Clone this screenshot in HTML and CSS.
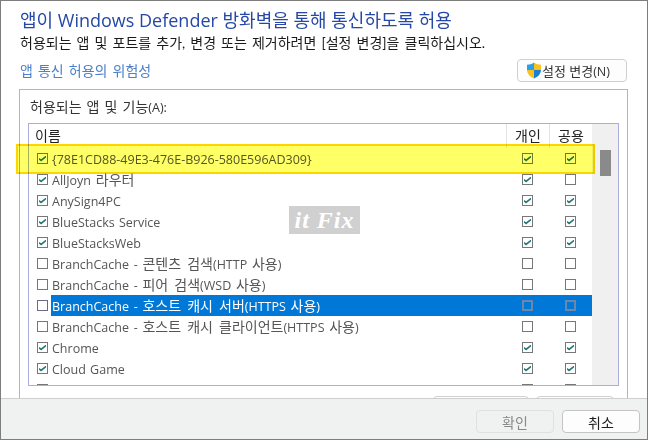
FILE: index.html
```html
<!DOCTYPE html>
<html lang="ko">
<head>
<meta charset="utf-8">
<title>허용되는 앱</title>
<link rel="stylesheet" href="styles.css">
</head>
<body>
<div class="window">
  <main class="main">
    <h1 class="title">앱이 Windows Defender 방화벽을 통해 통신하도록 허용</h1>
    <p class="subtitle">허용되는 앱 및 포트를 추가, 변경 또는 제거하려면 [설정 변경]을 클릭하십시오.</p>
    <div class="linkrow">
      <span class="link">앱 통신 허용의 위험성</span>
      <button class="btn change">
        <svg class="shield" viewBox="0 0 16 17" width="16" height="17">
          <path d="M8 .5C6 2 3.500 2.700 1 2.800V8H8Z" fill="#2b9fe8"/>
          <path d="M8 .5C10 2 12.500 2.700 15 2.800V8H8Z" fill="#f7c21b"/>
          <path d="M1 8C1.300 12 4 15 8 16.500V8Z" fill="#f7c21b"/>
          <path d="M15 8C14.700 12 12 15 8 16.500V8Z" fill="#1c7fd0"/>
        </svg><span>설정 변경<span class="en">(N)</span></span>
      </button>
    </div>
    <section class="group">
      <div class="group-label">허용되는 앱 및 기능<span class="en">(A):</span></div>
      <div class="table">
        <div class="table-main">
          <div class="thead">
            <div class="th name">이름</div>
            <div class="th col">개인</div>
            <div class="th col">공용</div>
          </div>
          <div class="rows">
            <div class="row"><span class="box on"></span><span class="label en">{78E1CD88-49E3-476E-B926-580E596AD309}</span><span class="cell"><span class="box on"></span></span><span class="cell"><span class="box on"></span></span></div>
            <div class="row"><span class="box on"></span><span class="label"><span class="en">AllJoyn </span>라우터</span><span class="cell"><span class="box on"></span></span><span class="cell"><span class="box"></span></span></div>
            <div class="row"><span class="box on"></span><span class="label en">AnySign4PC</span><span class="cell"><span class="box on"></span></span><span class="cell"><span class="box on"></span></span></div>
            <div class="row"><span class="box on"></span><span class="label en">BlueStacks Service</span><span class="cell"><span class="box on"></span></span><span class="cell"><span class="box on"></span></span></div>
            <div class="row"><span class="box on"></span><span class="label en">BlueStacksWeb</span><span class="cell"><span class="box on"></span></span><span class="cell"><span class="box on"></span></span></div>
            <div class="row"><span class="box"></span><span class="label"><span class="en">BranchCache - </span>콘텐츠 검색<span class="en">(HTTP </span>사용<span class="en">)</span></span><span class="cell"><span class="box"></span></span><span class="cell"><span class="box"></span></span></div>
            <div class="row"><span class="box"></span><span class="label"><span class="en">BranchCache - </span>피어 검색<span class="en">(WSD </span>사용<span class="en">)</span></span><span class="cell"><span class="box"></span></span><span class="cell"><span class="box"></span></span></div>
            <div class="row selected"><span class="box"></span><span class="label"><span class="en">BranchCache - </span>호스트 캐시 서버<span class="en">(HTTPS </span>사용<span class="en">)</span></span><span class="cell"><span class="box"></span></span><span class="cell"><span class="box"></span></span></div>
            <div class="row"><span class="box"></span><span class="label"><span class="en">BranchCache - </span>호스트 캐시 클라이언트<span class="en">(HTTPS </span>사용<span class="en">)</span></span><span class="cell"><span class="box"></span></span><span class="cell"><span class="box"></span></span></div>
            <div class="row"><span class="box on"></span><span class="label en">Chrome</span><span class="cell"><span class="box on"></span></span><span class="cell"><span class="box on"></span></span></div>
            <div class="row"><span class="box on"></span><span class="label en">Cloud Game</span><span class="cell"><span class="box on"></span></span><span class="cell"><span class="box on"></span></span></div>
            <div class="row"><span class="box on"></span><span class="label en">Collaboration</span><span class="cell"><span class="box on"></span></span><span class="cell"><span class="box on"></span></span></div>
          </div>
        </div>
        <div class="scrollbar"><div class="thumb"></div></div>
      </div>
      <div class="group-actions">
        <button class="btn ghost wide"></button>
        <button class="btn ghost narrow"></button>
      </div>
    </section>
  </main>
  <footer class="footer">
    <button class="btn foot disabled">확인</button>
    <button class="btn foot">취소</button>
  </footer>
  <div class="highlight"></div>
  <div class="watermark">it Fix</div>
</div>
</body>
</html>
```
FILE: styles.css
```css
* { box-sizing: border-box; }
html, body { margin: 0; padding: 0; }
body {
  width: 648px; height: 440px; overflow: hidden; background: #fff;
  font-family: "Lato", "Noto Sans CJK KR", sans-serif;
  font-size: 14px; color: #222; word-spacing: 1.500px;
}
.en { font-family: "Open Sans", "Noto Sans CJK KR", sans-serif; font-size: 12.500px; word-spacing: 1px; }
.window {
  position: relative; width: 648px; height: 440px;
  border: 1px solid #7d7d7d; display: flex; flex-direction: column; background: #fff;
}
.main { height: 397px; overflow: hidden; padding: 0 19px 0 18px; flex: none; }
.title { margin: 9px 0 0 1px; font-family: "Open Sans", "Noto Sans CJK KR", sans-serif; font-size: 18px; font-weight: 400; line-height: 21px; color: #2548a6; height: 21px; white-space: nowrap; word-spacing: 0; }
.subtitle { margin: 3px 0 0 1px; font-size: 14px; line-height: 18px; color: #1a1a1a; height: 18px; white-space: nowrap; }
.linkrow { display: flex; justify-content: space-between; align-items: flex-start; margin-top: 7px; height: 30px; }
.link { margin: 3px 0 0 1px; font-size: 14px; line-height: 18px; color: #4a80cc; }
.btn { font: inherit; background: #fdfdfd; border: 1px solid #d0d0d0; border-radius: 4px; padding: 0; color: #333; }
.change { width: 110px; height: 23px; margin-right: 1px; display: flex; align-items: center; padding-left: 8px; font-size: 13px; white-space: nowrap; }
.shield { flex: none; }
.group { border: 1px solid #b3aede; height: 340px; padding: 0 8px 0 8px; }
.group-label { height: 33px; padding: 8px 0 0 2px; font-size: 14px; line-height: 18px; color: #333; }
.table { display: flex; border: 1px solid #a9aedd; height: 263px; width: 591px; overflow: hidden; }
.table-main { width: 563px; flex: none; }
.thead { display: flex; height: 20px; }
.th { font-size: 14px; line-height: 20px; padding-top: 2px; color: #222; height: 24px; }
.th.name { flex: 1; padding-left: 6px; }
.th.col { width: 43px; text-align: center; border-left: 1px solid #e4e4e4; }
.rows { height: 241px; overflow: hidden; padding-top: 4px; }
.row { display: flex; align-items: center; height: 21px; padding-left: 8px; font-size: 14px; color: #555; }
.label { flex: 1; height: 21px; margin-left: 3px; padding-left: 1px; line-height: 21px; white-space: nowrap; word-spacing: 2.500px; }
.label .en { word-spacing: 1.500px; }
.label.en { font-size: 12.500px; line-height: 23px; word-spacing: 1px; }
.cell { width: 43px; display: flex; justify-content: center; }
.box { width: 11px; height: 11px; border: 1px solid #777; background: #fff; flex: none; position: relative; }
.box.on::after {
  content: ""; position: absolute; left: 1px; top: 1.500px; width: 7px; height: 6px;
  background: #1f7a78; clip-path: polygon(0 40%, 30% 62%, 100% 0, 100% 35%, 30% 100%, 0 72%);
}
.selected .label { background: #0078d7; color: #fff; }
.selected .cell { background: #0078d7; height: 21px; align-items: center; }
.selected .cell .box { background: #0078d7; border: 2px solid #6f86a8; }
.selected > .box { border-color: #6a6a8a; }
.scrollbar { flex: 1; background: #f0f0f0; padding: 26px 8px 0 8px; }
.thumb { width: 11px; height: 26px; background: #8a8a8a; }
.group-actions { display: flex; gap: 7px; margin: 10px 0 0 405px; }
.ghost { height: 23px; background: #fff; }
.wide { width: 96px; }
.narrow { width: 78px; }
.footer { flex: 1; background: #f0f1f1; border-top: 1px solid #cfcfcf; display: flex; justify-content: flex-end; align-items: flex-start; gap: 8px; padding: 11px 7px 0 0; }
.foot { width: 78px; height: 23px; font-size: 14px; background: #fdfdfd; border-color: #c4c4c4; color: #222; }
.foot.disabled { background: #f0f1f1; border-color: #e0e0e0; color: #888; }
.highlight {
  position: absolute; left: 15px; top: 143px; width: 579px; height: 30px;
  background: #ffff66; border: 2px solid #ffd500; mix-blend-mode: multiply;
}
.watermark {
  position: absolute; left: 288px; top: 205px; width: 71px; height: 28px;
  background: #d0d0d0; color: #fff; font-family: "Liberation Serif", serif;
  font-style: italic; font-weight: 700; font-size: 24px; line-height: 28px; text-align: center; letter-spacing: 1px; white-space: nowrap; word-spacing: 0;
}
```
